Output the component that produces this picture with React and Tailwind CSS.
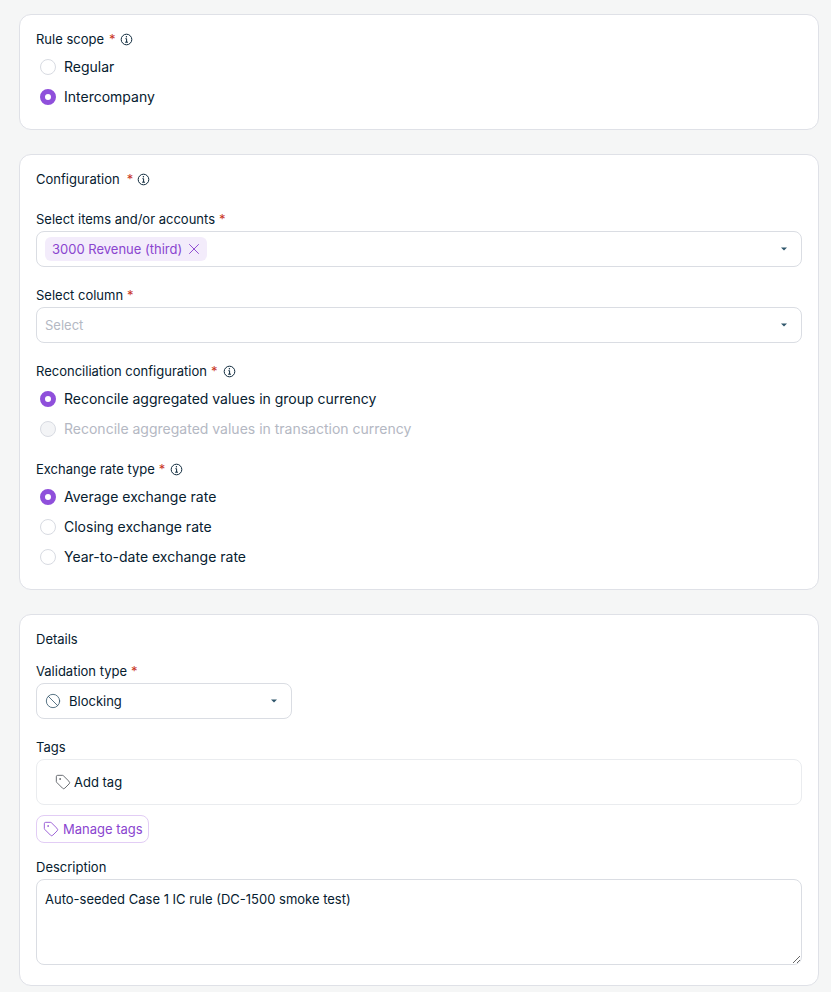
import React from "react";
import { X, Tag, Ban } from "lucide-react";

const Info = () => (
  <svg width="13" height="13" viewBox="0 0 13 13" fill="none" stroke="#0f2a3d" strokeWidth="1" className="shrink-0">
    <circle cx="6.5" cy="6.5" r="5.3" />
    <path d="M5.4 5.7h1.2v3.4M5.1 9.2h2.9" />
    <circle cx="6.4" cy="3.7" r="0.7" fill="#0f2a3d" stroke="none" />
  </svg>
);

const Star = ({ className = "ml-1" }) => <span className={`text-[#c9361f] ${className}`}>*</span>;

const Label = ({ children, req, info, gapInfo = "ml-[6px]", starClass }) => (
  <div className="flex items-center h-5 text-[13px] leading-5 text-[#06202f]">
    <span>{children}</span>
    {req && <Star className={starClass || "ml-1"} />}
    {info && <span className={`flex ${gapInfo}`}><Info /></span>}
  </div>
);

const Radio = ({ checked, disabled, children }) => (
  <div className="flex items-center h-[30px] pl-1">
    {checked ? (
      <span className="w-4 h-4 rounded-full border-[5px] border-[#8f4fdb] bg-white shrink-0" />
    ) : (
      <span className={`w-4 h-4 rounded-full border shrink-0 ${disabled ? "border-[#d8dbe2] bg-[#f3f4f6]" : "border-[#d8dbe2] bg-white"}`} />
    )}
    <span className={`ml-2 text-sm leading-5 ${disabled ? "text-[#b4b8c3]" : "text-[#06202f]"}`}>{children}</span>
  </div>
);

const Caret = () => (
  <svg width="6" height="4" viewBox="0 0 6 4" className="shrink-0">
    <path d="M0 .5h6L3 3.5z" fill="#2f566b" />
  </svg>
);

const Card = ({ children, className = "" }) => (
  <section className={`rounded-xl border border-[#dfe1e7] bg-white px-4 ${className}`}>{children}</section>
);

const SelectBox = ({ children }) => (
  <div className="mt-[2px] flex h-9 items-center justify-between rounded-lg border border-[#dadde3] bg-white pl-2 pr-[14px]">
    <div className="flex items-center">{children}</div>
    <Caret />
  </div>
);

export default function App() {
  return (
    <div className="min-h-[992px] bg-[#f5f6f6] pt-[14px] pl-[19px] pr-3 [font-family:Inter,sans-serif]">
      <div className="flex flex-col gap-6">
        <Card className="h-[116px] pt-[14px]">
          <Label req info starClass="ml-[5px]" gapInfo="ml-1">Rule scope</Label>
          <div className="mt-[3px]">
            <Radio>Regular</Radio>
            <Radio checked>Intercompany</Radio>
          </div>
        </Card>

        <Card className="h-[436px] pt-[14px]">
          <Label req info starClass="ml-[7px]" gapInfo="ml-1">Configuration</Label>
          <div className="mt-5">
            <Label req>Select items and/or accounts</Label>
            <SelectBox>
              <span className="flex h-6 items-center rounded-md bg-[#f3ecfb] pl-[7px] pr-1 text-[13px] text-[#8a45cf]">
                <span className="pt-px">3000 Revenue (third)</span>
                <X size={18} strokeWidth={1.25} className="ml-[3px]" />
              </span>
            </SelectBox>
          </div>
          <div className="mt-[18px]">
            <Label req>Select column</Label>
            <SelectBox>
              <span className="pt-[2px] text-[13px] text-[#b4b8c3]">Select</span>
            </SelectBox>
          </div>
          <div className="mt-[18px]">
            <Label req info>Reconciliation configuration</Label>
            <div className="mt-[3px]">
              <Radio checked>Reconcile aggregated values in group currency</Radio>
              <Radio disabled>Reconcile aggregated values in transaction currency</Radio>
            </div>
          </div>
          <div className="mt-[15px]">
            <Label req info gapInfo="ml-[5px]">Exchange rate type</Label>
            <div className="mt-[3px]">
              <Radio checked>Average exchange rate</Radio>
              <Radio>Closing exchange rate</Radio>
              <Radio>Year-to-date exchange rate</Radio>
            </div>
          </div>
        </Card>

        <Card className="h-[372px] pt-[14px]">
          <Label>Details</Label>
          <div className="mt-3">
            <Label req>Validation type</Label>
            <div className="mt-[2px] flex h-9 w-[256px] items-center justify-between rounded-lg border border-[#dadde3] bg-white pl-2 pr-[14px]">
              <div className="flex items-center">
                <Ban size={16} strokeWidth={1.3} className="text-[#3f5f73]" />
                <span className="ml-2 pt-[2px] text-[13px] text-[#06202f]">Blocking</span>
              </div>
              <Caret />
            </div>
          </div>
          <div className="mt-[18px]">
            <Label>Tags</Label>
            <div className="mt-[2px] flex h-[46px] items-center rounded-lg border border-[#eaecef] bg-white pl-[18px]">
              <Tag size={16} strokeWidth={1.25} className="text-[#4b4f55]" />
              <span className="ml-[3px] pt-[2px] text-[13px] text-[#06202f]">Add tag</span>
            </div>
          </div>
          <button className="mt-[10px] flex h-7 items-center rounded-lg border border-[#e2cdf5] bg-white pl-[6px] pr-[5px] text-[13px] text-[#8a45cf]">
            <Tag size={16} strokeWidth={1.25} />
            <span className="ml-1 pt-[2px]">Manage tags</span>
          </button>
          <div className="mt-[14px]">
            <Label>Description</Label>
            <textarea
              readOnly
              defaultValue="Auto-seeded Case 1 IC rule (DC-1500 smoke test)"
              className="mt-[2px] block h-[86px] w-full rounded-lg border border-[#dadde3] bg-white px-2 py-[10px] text-[13px] leading-[18px] text-[#06202f] outline-none"
            />
          </div>
        </Card>
      </div>
    </div>
  );
}
